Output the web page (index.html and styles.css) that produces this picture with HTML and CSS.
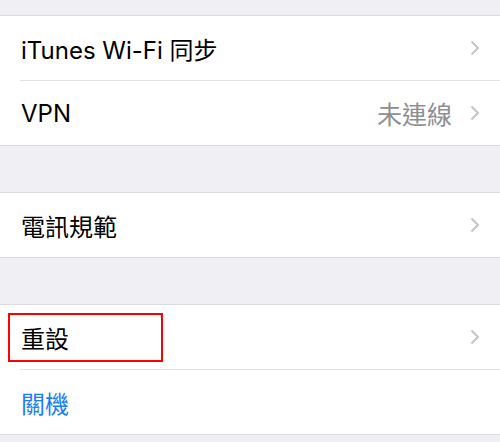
FILE: index.html
```html
<!DOCTYPE html>
<html>
	<head>
		<meta charset="utf-8">
		<link rel="stylesheet" href="styles.css">
	</head>
	<body>
		<div class="group">
			<div class="row">
				<span class="label">iTunes Wi-Fi 同步</span>
				<svg class="chev" width="10" height="16" viewBox="0 0 10 16"><polyline points="1.5,1.5 8,8 1.5,14.5"/></svg>
			</div>
			<div class="row">
				<span class="label">VPN</span>
				<span class="value">未連線</span>
				<svg class="chev" width="10" height="16" viewBox="0 0 10 16"><polyline points="1.5,1.5 8,8 1.5,14.5"/></svg>
			</div>
		</div>
		<div class="group">
			<div class="row">
				<span class="label">電訊規範</span>
				<svg class="chev" width="10" height="16" viewBox="0 0 10 16"><polyline points="1.5,1.5 8,8 1.5,14.5"/></svg>
			</div>
		</div>
		<div class="group">
			<div class="row">
				<span class="label">重設</span>
				<svg class="chev" width="10" height="16" viewBox="0 0 10 16"><polyline points="1.5,1.5 8,8 1.5,14.5"/></svg>
				<div class="mark"></div>
			</div>
			<div class="row">
				<span class="label action">關機</span>
			</div>
		</div>
	</body>
</html>
```

FILE: styles.css
```css
body {
	margin: 0;
	padding-top: 15px;
	background: #efeff4;
	font-family: "Inter", "Noto Sans CJK TC", sans-serif;
	overflow: hidden;
}
.group {
	background: #fff;
	border-top: solid 1px #dcdce0;
	border-bottom: solid 1px #dcdce0;
}
.group + .group {
	margin-top: 46px;
}
.row {
	position: relative;
	height: 64px;
	display: flex;
	align-items: center;
	padding: 0 20px 0 21px;
}
.row + .row::before {
	content: "";
	position: absolute;
	left: 20px; right: 0; top: -1px;
	border-top: solid 1px #e2e2e6;
}
.row + .row {
	margin-top: 1px;
}
.label {
	flex: 1;
	font-size: 24px;
	color: #000;
}
.label.action {
	color: #1a7df7;
}
.value {
	font-size: 25px;
	color: #8e8e93;
	margin-right: 18px;
}
.chev polyline {
	fill: none;
	stroke: #c4c4c9;
	stroke-width: 2;
}
.mark {
	position: absolute;
	left: 8px; top: 8px;
	width: 151px; height: 45px;
	border: solid 2px #f00;
}
```
